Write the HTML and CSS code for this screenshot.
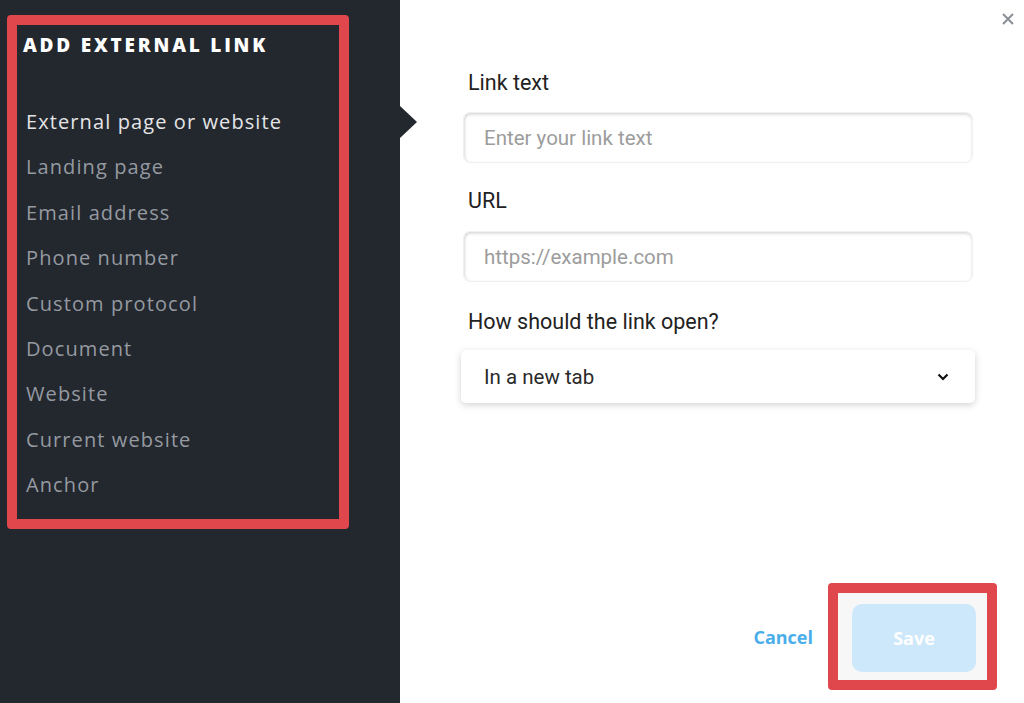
FILE: index.html
```html
<!DOCTYPE html>
<html lang="en">
<head>
    <meta charset="UTF-8">
    <meta name="viewport" content="width=device-width, initial-scale=1.0">
    <title>Add External Link</title>
    <link rel="stylesheet" href="styles.css">
</head>
<body>

<div class="modal">
    <aside class="sidebar">
        <div class="highlight">
            <h2 class="title">ADD EXTERNAL LINK</h2>
            <ul class="types">
                <li class="active">External page or website</li>
                <li>Landing page</li>
                <li>Email address</li>
                <li>Phone number</li>
                <li>Custom protocol</li>
                <li>Document</li>
                <li>Website</li>
                <li>Current website</li>
                <li>Anchor</li>
            </ul>
        </div>
        <span class="pointer"></span>
    </aside>

    <main class="content">
        <button class="close" aria-label="Close">
            <svg width="12" height="12" viewBox="0 0 12 12"><path d="M1 1 L11 11 M11 1 L1 11" stroke="#8a8f96" stroke-width="2" fill="none"/></svg>
        </button>

        <form class="link-form">
            <label for="link_text" class="first">Link text</label>
            <input type="text" id="link_text" placeholder="Enter your link text">

            <label for="url">URL</label>
            <input type="text" id="url" placeholder="https://example.com">

            <label for="target" class="open-label">How should the link open?</label>
            <div class="select" id="target">
                <span>In a new tab</span>
                <svg width="12" height="8" viewBox="0 0 12 8"><path d="M1.5 1.5 L6 6 L10.5 1.5" stroke="#111" stroke-width="2.2" fill="none"/></svg>
            </div>
        </form>

        <div class="actions">
            <a href="#" class="cancel">Cancel</a>
            <div class="save-mark">
                <button type="button" class="save">Save</button>
            </div>
        </div>
    </main>
</div>

</body>
</html>
```

FILE: styles.css
```css
body {
    margin: 0;
    padding: 0;
    font-family: Roboto, Arial, sans-serif;
    background-color: #fff;
}
.modal {
    display: flex;
    width: 1024px;
    height: 703px;
    overflow: hidden;
}
.sidebar {
    position: relative;
    width: 400px;
    flex-shrink: 0;
    background-color: #23272e;
    padding: 15px 0 0 7px;
    box-sizing: border-box;
}
.highlight {
    width: 342px;
    height: 514px;
    border: 10px solid #e0474c;
    border-radius: 4px;
    box-sizing: border-box;
    font-family: "Open Sans", "Noto Sans", sans-serif;
}
.title {
    margin: 7px 0 0 6px;
    font-size: 19px;
    font-weight: 800;
    letter-spacing: 2.8px;
    line-height: 26px;
    color: #fff;
}
.types {
    list-style: none;
    margin: 49px 0 0 0;
    padding: 0 0 0 9px;
}
.types li {
    height: 45.4px;
    line-height: 30px;
    font-size: 20px;
    letter-spacing: 1.1px;
    color: #959aa1;
}
.types li.active {
    color: #e4e5e7;
}
.pointer {
    position: absolute;
    left: 400px;
    top: 106px;
    width: 0;
    height: 0;
    border-left: 17px solid #23272e;
    border-top: 16px solid transparent;
    border-bottom: 16px solid transparent;
}
.content {
    position: relative;
    flex: 1;
    display: flex;
    flex-direction: column;
    padding: 71px 0 13px 63px;
}
.close {
    position: absolute;
    top: 13px;
    right: 10px;
    background: none;
    border: none;
    padding: 0;
    cursor: pointer;
}
.link-form {
    display: flex;
    flex-direction: column;
    width: 512px;
}
.link-form label {
    display: block;
    font-size: 21.5px;
    line-height: 24px;
    color: #222;
    padding-left: 5px;
    margin: 26px 0 17px;
}
.link-form label.first {
    margin-top: 0;
}
.link-form label.open-label {
    margin-top: 28px;
    margin-bottom: 16px;
}
.link-form input {
    width: 510px;
    height: 51px;
    padding: 0 20px;
    border: 1px solid #f0f0f0;
    border-radius: 7px;
    box-shadow: inset 0 2px 3px rgba(0, 0, 0, 0.13), inset 2px 0 2px rgba(0, 0, 0, 0.05);
    box-sizing: border-box;
    font-family: Roboto, Arial, sans-serif;
    font-size: 20.5px;
    color: #333;
    outline: none;
}
.link-form input#url {
    margin-top: 1px;
}
.link-form input::placeholder {
    color: #9c9c9c;
}
.select {
    display: flex;
    align-items: center;
    justify-content: space-between;
    width: 514px;
    height: 53px;
    margin-left: -2px;
    padding: 0 26px 0 23px;
    border-radius: 5px;
    box-shadow: 0 2px 7px rgba(0, 0, 0, 0.18);
    box-sizing: border-box;
    font-size: 20.5px;
    color: #2a2a2a;
}
.actions {
    margin-top: auto;
    display: flex;
    align-items: center;
    justify-content: flex-end;
    padding-right: 27px;
}
.cancel {
    font-family: "Open Sans", "Noto Sans", sans-serif;
    font-weight: 700;
    font-size: 18px;
    color: #4aaeea;
    text-decoration: none;
    margin-right: 15px;
}
.save-mark {
    border: 10px solid #e0474c;
    border-radius: 4px;
    padding: 11px 11px 8px 14px;
    background-color: #f7f7f7;
}
.save {
    width: 124px;
    height: 68px;
    border: none;
    border-radius: 10px;
    background-color: #cde8fb;
    color: #fff;
    font-family: "Open Sans", "Noto Sans", sans-serif;
    font-weight: 700;
    font-size: 18px;
    cursor: pointer;
    display: block;
}
```
